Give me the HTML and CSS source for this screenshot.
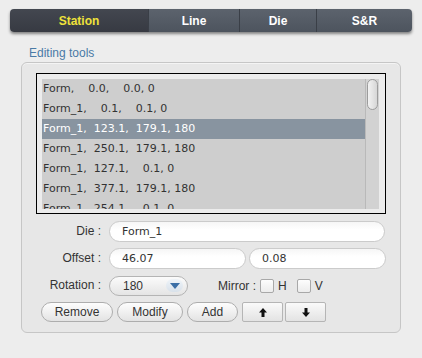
FILE: index.html
```html
<!DOCTYPE html>
<html lang="en">

<head>
  <meta charset="UTF-8">
  <title>Station - Editing tools</title>
  <link rel="stylesheet" href="styles.css">
</head>

<body>
  <div class="tabs">
    <div class="tab tab-station active">Station</div>
    <div class="tab tab-line">Line</div>
    <div class="tab tab-die">Die</div>
    <div class="tab tab-sr">S&amp;R</div>
  </div>

  <div class="group-title">Editing tools</div>

  <div class="panel">
    <div class="list-frame">
      <div class="list">
        <div class="rows">
          <div class="row">Form,    0.0,    0.0, 0</div>
          <div class="row">Form_1,    0.1,    0.1, 0</div>
          <div class="row selected">Form_1,  123.1,  179.1, 180</div>
          <div class="row">Form_1,  250.1,  179.1, 180</div>
          <div class="row">Form_1,  127.1,    0.1, 0</div>
          <div class="row">Form_1,  377.1,  179.1, 180</div>
          <div class="row">Form_1,  254.1,    0.1, 0</div>
        </div>
        <div class="scrollbar">
          <div class="thumb"></div>
        </div>
      </div>
    </div>

    <div class="form">
      <label class="label">Die :</label>
      <div class="field-row">
        <div class="field wide">Form_1</div>
      </div>

      <label class="label">Offset :</label>
      <div class="field-row">
        <div class="field half">46.07</div>
        <div class="field half">0.08</div>
      </div>

      <label class="label">Rotation :</label>
      <div class="field-row">
        <div class="combo">
          <span class="combo-value">180</span>
          <span class="combo-arrow">
            <svg width="10" height="6" viewBox="0 0 10 6"><polygon points="0,0 10,0 5,6" fill="#3a6ea6"/></svg>
          </span>
        </div>
        <div class="mirror">
          <span class="mirror-label">Mirror :</span>
          <span class="check"></span><span class="check-text">H</span>
          <span class="check"></span><span class="check-text">V</span>
        </div>
      </div>

      <div class="buttons">
        <button class="btn btn-remove">Remove</button>
        <button class="btn btn-modify">Modify</button>
        <button class="btn btn-add">Add</button>
        <button class="btn-square">
          <svg width="8" height="9" viewBox="0 0 8 9"><polygon points="4,0 8,4.5 5.5,4.5 5.5,9 2.5,9 2.5,4.5 0,4.5" fill="#111"/></svg>
        </button>
        <button class="btn-square">
          <svg width="8" height="9" viewBox="0 0 8 9"><polygon points="4,9 8,4.5 5.5,4.5 5.5,0 2.5,0 2.5,4.5 0,4.5" fill="#111"/></svg>
        </button>
      </div>
    </div>
  </div>
</body>

</html>
```

FILE: styles.css
```css
body {
  margin: 0;
  background-color: #ededed;
  font-family: 'Liberation Sans', Arial, sans-serif;
  color: #333;
  width: 422px;
  height: 358px;
  overflow: hidden;
}

.tabs {
  display: flex;
  margin: 9px 10px 0 10px;
  height: 23px;
  border-radius: 4px;
  overflow: hidden;
  box-shadow: 0 2px 3px rgba(0, 0, 0, 0.45);
}

.tab {
  display: flex;
  align-items: center;
  justify-content: center;
  font-size: 12px;
  font-weight: bold;
  color: #fff;
  background: linear-gradient(#5c636d, #4d545e);
  border-left: 1px solid #3a3f47;
}

.tab-station {
  width: 138px;
  border-left: none;
}

.tab-line {
  width: 90px;
}

.tab-die {
  width: 76px;
}

.tab-sr {
  flex: 1;
}

.tab.active {
  color: #efe23a;
  background: linear-gradient(#434750, #373a42);
}

.group-title {
  margin: 10px 0 0 29px;
  height: 20px;
  line-height: 22px;
  font-size: 12px;
  color: #4a7aa6;
}

.panel {
  margin-left: 21px;
  width: 378px;
  height: 269px;
  border: 1px solid #c6c6c6;
  border-radius: 6px;
  background-color: #e7e7e7;
  box-shadow: inset 0 1px 0 #f4f4f4;
}

.list-frame {
  margin: 10px 0 0 14px;
  width: 337px;
  height: 129px;
  border: 1px solid #000;
  padding: 5px 6px 5px 5px;
  background-color: #ececec;
}

.list {
  display: flex;
  height: 130px;
  background-color: #cecece;
  overflow: hidden;
}

.rows {
  flex: 1;
  overflow: hidden;
}

.row {
  height: 20px;
  line-height: 20px;
  padding-left: 1px;
  font-family: 'DejaVu Sans', sans-serif;
  font-size: 11px;
  color: #333;
  white-space: pre;
}

.row.selected {
  background-color: #8894a0;
  color: #fff;
}

.scrollbar {
  width: 13px;
  border-left: 1px solid #b9b9b9;
  background-color: #d2d2d2;
}

.thumb {
  width: 11px;
  height: 31px;
  margin-left: 1px;
  border: 1px solid #9c9c9c;
  box-sizing: border-box;
  border-radius: 6px;
  background: linear-gradient(to right, #f2f2f2, #d6d6d6);
}

.form {
  display: grid;
  grid-template-columns: 79px 1fr;
  column-gap: 8px;
  row-gap: 6px;
  margin-top: 7px;
  padding-right: 15px;
}

.label {
  font-size: 12px;
  text-align: right;
  line-height: 21px;
  color: #333;
}

.field-row {
  display: flex;
  align-items: center;
  gap: 3px;
  height: 21px;
}

.field {
  height: 19px;
  line-height: 19px;
  padding-left: 12px;
  border: 1px solid #cbcbcb;
  border-radius: 11px;
  background: linear-gradient(#f6f6f6, #ffffff 40%);
  font-family: 'DejaVu Sans', sans-serif;
  font-size: 11px;
  color: #333;
}

.field.wide {
  width: 262px;
}

.field.half {
  width: 123px;
}

.combo {
  display: flex;
  align-items: center;
  width: 77px;
  height: 18px;
  border: 1px solid #b4b4b4;
  border-radius: 10px;
  background: linear-gradient(#fbfbfb, #e4e4e4);
  font-size: 12px;
}

.combo-value {
  margin-left: 13px;
  flex: 1;
}

.combo-arrow {
  display: flex;
  align-items: center;
  justify-content: center;
  width: 17px;
  height: 13px;
  margin-right: 4px;
  border-radius: 7px;
  background: linear-gradient(#eef3f8, #d8e1ea);
}

.mirror {
  display: flex;
  align-items: center;
  margin-left: 27px;
  font-size: 12px;
}

.mirror-label {
  margin-right: 4px;
}

.check {
  width: 12px;
  height: 12px;
  border: 1px solid #a8a8a8;
  border-radius: 2px;
  background: linear-gradient(#fdfdfd, #ececec);
}

.check-text {
  margin: 0 10px 0 4px;
}

.buttons {
  grid-column: 1 / 3;
  display: flex;
  gap: 4px;
  margin: 0 0 0 19px;
}

.btn {
  height: 20px;
  padding: 0;
  border: 1px solid #adadad;
  border-radius: 10px;
  background: linear-gradient(#fdfdfd, #e3e3e3);
  font-family: 'Liberation Sans', Arial, sans-serif;
  font-size: 12px;
  color: #333;
}

.btn-remove {
  width: 72px;
}

.btn-modify {
  width: 66px;
}

.btn-add {
  width: 51px;
}

.btn-square {
  display: flex;
  align-items: center;
  justify-content: center;
  width: 41px;
  height: 20px;
  padding: 0;
  border: 1px solid #b5b5b5;
  border-radius: 2px;
  background: linear-gradient(#fafafa, #e3e3e3);
}

.btn-square + .btn-square {
  margin-left: -2px;
}
```
